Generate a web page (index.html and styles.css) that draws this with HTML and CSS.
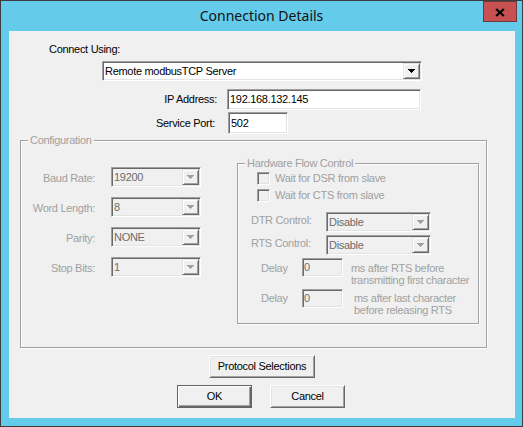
FILE: index.html
```html
<!DOCTYPE html>
<html>
<head>
<meta charset="utf-8">
<title>Connection Details</title>
<link rel="stylesheet" href="styles.css">
</head>
<body>
<div class="window">
  <div class="titlebar">
    <div class="title">Connection Details</div>
    <div class="close"><svg width="10" height="9" viewBox="0 0 10 9"><path d="M1.2 1L8.8 8M8.8 1L1.2 8" stroke="#000" stroke-width="2.3" fill="none"/></svg></div>
  </div>
  <div class="content">
    <div class="lbl-connect">Connect Using:</div>
    <div class="combo sunken main-combo">
      <div class="val">Remote modbusTCP Server</div>
      <div class="arrow"><svg width="7" height="4" viewBox="0 0 7 4"><path d="M0 0h7v1H0zM1 1h5v1H1zM2 2h3v1H2zM3 3h1v1H3z" fill="#000"/></svg></div>
    </div>
    <div class="field-row ip-row">
      <div class="lbl ip-lbl">IP Address:</div>
      <div class="textbox sunken ip-box">192.168.132.145</div>
    </div>
    <div class="field-row port-row">
      <div class="lbl port-lbl">Service Port:</div>
      <div class="textbox sunken port-box">502</div>
    </div>

    <div class="group config">
      <span class="group-title">Configuration</span>
      <div class="config-left">
        <div class="cfg-row"><div class="cfg-lbl">Baud Rate:</div><div class="combo sunken disabled cfg-combo"><div class="val">19200</div><div class="arrow"><svg width="7" height="4" viewBox="0 0 7 4"><path d="M0 0h7v1H0zM1 1h5v1H1zM2 2h3v1H2zM3 3h1v1H3z" fill="#a0a0a0"/></svg></div></div></div>
        <div class="cfg-row"><div class="cfg-lbl">Word Length:</div><div class="combo sunken disabled cfg-combo"><div class="val">8</div><div class="arrow"><svg width="7" height="4" viewBox="0 0 7 4"><path d="M0 0h7v1H0zM1 1h5v1H1zM2 2h3v1H2zM3 3h1v1H3z" fill="#a0a0a0"/></svg></div></div></div>
        <div class="cfg-row"><div class="cfg-lbl">Parity:</div><div class="combo sunken disabled cfg-combo"><div class="val">NONE</div><div class="arrow"><svg width="7" height="4" viewBox="0 0 7 4"><path d="M0 0h7v1H0zM1 1h5v1H1zM2 2h3v1H2zM3 3h1v1H3z" fill="#a0a0a0"/></svg></div></div></div>
        <div class="cfg-row"><div class="cfg-lbl">Stop Bits:</div><div class="combo sunken disabled cfg-combo"><div class="val">1</div><div class="arrow"><svg width="7" height="4" viewBox="0 0 7 4"><path d="M0 0h7v1H0zM1 1h5v1H1zM2 2h3v1H2zM3 3h1v1H3z" fill="#a0a0a0"/></svg></div></div></div>
      </div>

      <div class="group hw">
        <span class="group-title">Hardware Flow Control</span>
        <div class="cb-row cb1"><div class="cb sunken disabled"></div><div class="cb-lbl">Wait for DSR from slave</div></div>
        <div class="cb-row cb2"><div class="cb sunken disabled"></div><div class="cb-lbl">Wait for CTS from slave</div></div>
        <div class="ctl-row dtr"><div class="ctl-lbl">DTR Control:</div><div class="combo sunken disabled hw-combo"><div class="val">Disable</div><div class="arrow"><svg width="7" height="4" viewBox="0 0 7 4"><path d="M0 0h7v1H0zM1 1h5v1H1zM2 2h3v1H2zM3 3h1v1H3z" fill="#a0a0a0"/></svg></div></div></div>
        <div class="ctl-row rts"><div class="ctl-lbl">RTS Control:</div><div class="combo sunken disabled hw-combo"><div class="val">Disable</div><div class="arrow"><svg width="7" height="4" viewBox="0 0 7 4"><path d="M0 0h7v1H0zM1 1h5v1H1zM2 2h3v1H2zM3 3h1v1H3z" fill="#a0a0a0"/></svg></div></div></div>
        <div class="delay-row d1">
          <div class="delay-lbl">Delay</div>
          <div class="textbox sunken disabled delay-box">0</div>
          <div class="delay-text">ms after RTS before<br>transmitting first character</div>
        </div>
        <div class="delay-row d2">
          <div class="delay-lbl">Delay</div>
          <div class="textbox sunken disabled delay-box">0</div>
          <div class="delay-text">ms after last character<br>before releasing RTS</div>
        </div>
      </div>
    </div>

    <div class="btn protocol">Protocol Selections</div>
    <div class="btn-row">
      <div class="btn default ok">OK</div>
      <div class="btn cancel">Cancel</div>
    </div>
  </div>
</div>
</body>
</html>
```
FILE: styles.css
```css
* { box-sizing: border-box; }
html, body { margin: 0; padding: 0; }
body {
  width: 523px; height: 427px; overflow: hidden;
  background: #65cbea;
  font-family: "Liberation Sans", Arial, sans-serif;
  font-size: 11px; line-height: 13px; letter-spacing: -0.3px;
  color: #000;
}
.window {
  position: relative;
  width: 523px; height: 427px;
  border: 1px solid #3c3c3c;
  background: #65cbea;
  display: flex; flex-direction: column;
}
.titlebar {
  height: 30px; flex: none;
  display: flex; align-items: center; justify-content: center;
  padding-bottom: 1px;
}
.title {
  font-family: "Noto Sans", sans-serif;
  font-size: 14px; line-height: 19px; letter-spacing: 0;
  color: #111;
}
.close {
  position: absolute; top: 0; right: 5px;
  width: 34px; height: 21px;
  background: #c75050;
  border: 1px solid #6e3a3a;
  display: flex; align-items: center; justify-content: center;
  padding-top: 1px;
}
.close svg { display: block; }
.content {
  flex: 1;
  margin: 0 7px 8px 8px;
  background: #f0f0f0;
  display: flex; flex-direction: column; align-items: flex-start;
  padding-top: 12px;
}
.sunken {
  border: 1px solid;
  border-color: #a0a0a0 #fff #fff #a0a0a0;
  box-shadow: inset 1px 1px 0 #696969, inset -1px -1px 0 #e3e3e3;
  background: #fff;
}
.sunken.disabled { background: #f0f0f0; }
.lbl-connect { margin-left: 40px; }
.combo { display: flex; align-items: stretch; padding: 1px; }
.combo .val {
  flex: 1; padding-left: 1px;
  display: flex; align-items: center;
  white-space: nowrap; overflow: hidden;
}
.combo.disabled .val { color: #6d6d6d; }
.combo .arrow {
  width: 17px; flex: none;
  background: #f0f0f0;
  border: 1px solid;
  border-color: #e3e3e3 #696969 #696969 #e3e3e3;
  box-shadow: inset 1px 1px 0 #fff, inset -1px -1px 0 #a0a0a0;
  display: flex; align-items: center; justify-content: center;
}
.combo .arrow svg { display: block; }
.main-combo { margin-top: 5px; margin-left: 93px; width: 320px; height: 20px; }

.field-row { display: flex; align-items: center; }
.lbl { text-align: right; }
.textbox { padding: 0 0 0 2px; display: flex; align-items: center; white-space: nowrap; }
.textbox.disabled { color: #6d6d6d; }
.ip-row { margin-top: 8px; }
.ip-lbl { width: 208px; }
.ip-box { margin-left: 10px; width: 194px; height: 21px; }
.port-row { margin-top: 2px; }
.port-lbl { width: 206px; }
.port-box { margin-left: 13px; width: 60px; height: 22px; }

.group {
  position: relative;
  border: 1px solid #a0a0a0;
  box-shadow: inset 1px 1px 0 #fff, 1px 1px 0 #fff;
}
.group-title {
  position: absolute; top: -7px; left: 7px;
  padding: 0 2px;
  background: #f0f0f0;
  color: #a0a0a0;
  white-space: nowrap;
}
.config {
  margin-top: 6px; margin-left: 11px;
  width: 467px; height: 208px;
  display: flex; align-items: flex-start;
}
.config-left { margin-top: 26px; display: flex; flex-direction: column; gap: 10px; }
.cfg-row { display: flex; align-items: flex-start; }
.cfg-lbl { width: 74px; text-align: right; color: #a0a0a0; margin-top: 5px; white-space: nowrap; }
.cfg-combo { margin-left: 16px; width: 90px; height: 20px; }

.hw {
  margin-left: 36px; margin-top: 22px;
  width: 242px; height: 161px;
  display: flex; flex-direction: column; align-items: flex-start;
  color: #a0a0a0;
}
.cb-row { display: flex; align-items: center; margin-left: 19px; }
.cb1 { margin-top: 8px; }
.cb2 { margin-top: 4px; }
.cb { width: 13px; height: 13px; flex: none; }
.cb-lbl { margin-left: 5px; white-space: nowrap; }
.ctl-row { display: flex; align-items: flex-start; margin-left: 13px; }
.dtr { margin-top: 10px; }
.rts { margin-top: 3px; }
.ctl-lbl { width: 75px; margin-top: 2px; white-space: nowrap; }
.hw-combo { width: 105px; height: 20px; }
.delay-row { display: flex; align-items: flex-start; margin-left: 23px; }
.d1 { margin-top: 3px; }
.d2 { margin-top: 3px; }
.delay-lbl { width: 41px; line-height: 12px; margin-top: 4px; }
.d2 .delay-lbl { margin-top: 3px; }
.delay-box { width: 41px; height: 19px; padding-left: 1px; }
.delay-text { line-height: 12px; margin-left: 8px; margin-top: 4px; white-space: nowrap; }
.d2 .delay-text { margin-left: 11px; margin-top: 3px; }

.btn {
  display: flex; align-items: center; justify-content: center;
  background: #f0f0f0;
  border: 1px solid;
  border-color: #fff #696969 #696969 #fff;
  box-shadow: inset 1px 1px 0 #e3e3e3, inset -1px -1px 0 #a0a0a0;
  padding-bottom: 1px;
  white-space: nowrap;
}
.btn.default {
  border-color: #646464;
  box-shadow: inset 1px 1px 0 #fff, inset -1px -1px 0 #696969, inset -2px -2px 0 #a0a0a0;
}
.protocol { margin-top: 7px; margin-left: 200px; width: 106px; height: 23px; }
.btn-row { margin-top: 7px; margin-left: 168px; display: flex; gap: 18px; }
.ok { width: 75px; height: 23px; }
.cancel { width: 75px; height: 23px; }
```
